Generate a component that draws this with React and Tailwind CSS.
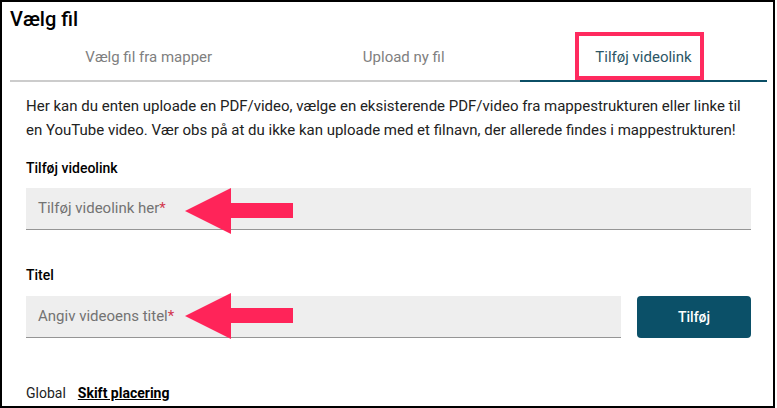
import { useState } from 'react';

const tabs = ['Vælg fil fra mapper', 'Upload ny fil', 'Tilføj videolink'];

function Arrow({ className }) {
  return (
    <svg className={className} width="110" height="46" viewBox="0 0 110 46">
      <polygon points="0,23 46,0 46,15 108,15 108,30 46,30 46,46" fill="#ff2459" />
    </svg>
  );
}

function Field({ placeholder, className = '' }) {
  return (
    <div className={`h-[42px] bg-[#eeeeee] border-b border-[#959595] flex items-center pl-3 text-[15px] ${className}`}>
      <span className="text-[#737373]">{placeholder}</span>
      <span className="text-[#d2384f]">*</span>
    </div>
  );
}

export default function App() {
  const [active, setActive] = useState(2);

  return (
    <div className="w-[775px] h-[408px] border-2 border-black bg-white relative font-['Roboto',sans-serif] text-[#212121] pl-2 pr-[6px] overflow-hidden">
      <div className="pt-[5px] text-[20px] leading-[24px] font-medium text-black">Vælg fil</div>

      <div className="mt-[3px] flex border-b-2 border-[#cccccc]">
        {tabs.map((t, i) => (
          <button
            key={t}
            onClick={() => setActive(i)}
            className={`flex-auto h-[48px] -mb-[2px] border-b-2 text-[15px] leading-[20px] ${
              active === i ? 'border-[#0b4f66] text-[#2c5666]' : 'border-transparent text-[#808080]'
            }`}
          >
            {t}
          </button>
        ))}
      </div>

      <div className="px-4">
        <p className="mt-[12px] text-[15px] leading-[24px] text-[#222222]">
          Her kan du enten uploade en PDF/video, vælge en eksisterende PDF/video fra mappestrukturen eller linke til en YouTube video. Vær obs på at du ikke kan uploade med et filnavn, der allerede findes i mappestrukturen!
        </p>

        <div className="mt-[16px] text-[14px] leading-[20px] font-medium text-black">Tilføj videolink</div>
        <Field placeholder="Tilføj videolink her" className="mt-[10px]" />

        <div className="mt-[35px] text-[14px] leading-[20px] font-medium text-black">Titel</div>
        <div className="mt-[11px] flex gap-4">
          <Field placeholder="Angiv videoens titel" className="flex-1" />
          <button className="w-[114px] h-[42px] rounded-[4px] bg-[#0b5068] text-white text-[14px] font-medium">
            Tilføj
          </button>
        </div>

        <div className="mt-[45px] flex gap-3 text-[14px] leading-[20px]">
          <span className="text-[#222222]">Global</span>
          <span className="font-bold underline text-black">Skift placering</span>
        </div>
      </div>

      {/* annotations */}
      <div className="absolute left-[573px] top-[30px] w-[129px] h-[48px] border-4 border-[#ff2a5f]" />
      <Arrow className="absolute left-[183px] top-[186px]" />
      <Arrow className="absolute left-[183px] top-[291px]" />
    </div>
  );
}
